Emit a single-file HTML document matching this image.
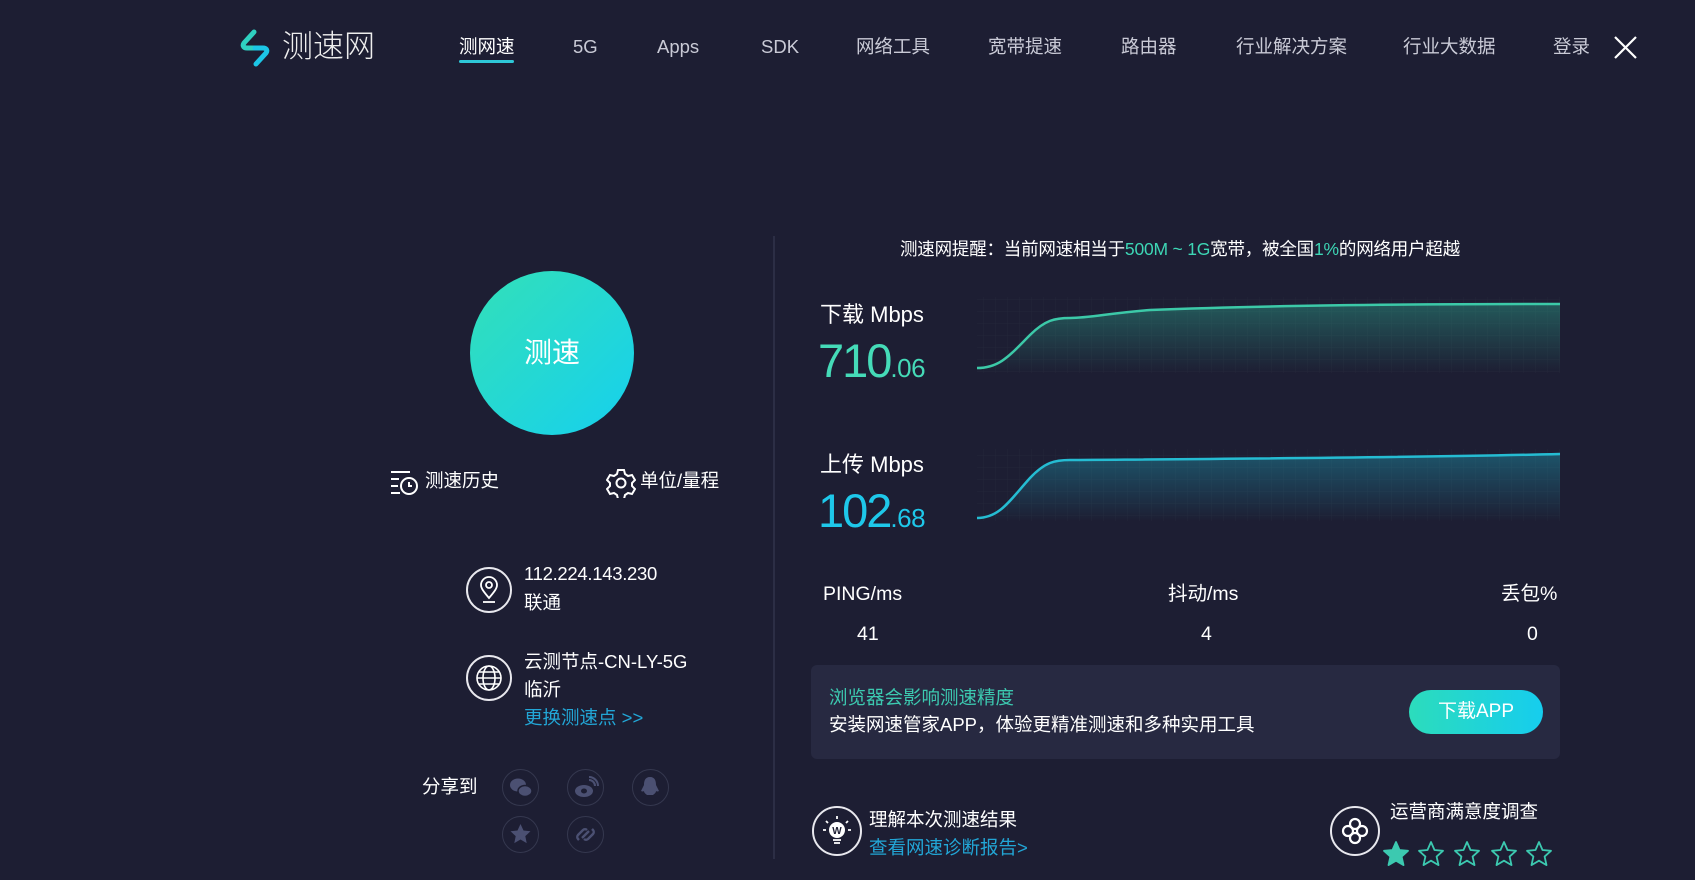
<!DOCTYPE html>
<html><head><meta charset="utf-8"><style>
*{margin:0;padding:0;box-sizing:border-box}
body{width:1695px;height:880px;background:#1d1e33;font-family:"Liberation Sans","Noto Sans CJK SC",sans-serif;color:#fff;position:relative;overflow:hidden}
.a{position:absolute;white-space:nowrap;line-height:1.2}
.nav{font-size:18.5px;color:#c9cad6;top:36px}
.t{font-size:18.5px;color:#fff}
.cir{position:absolute;border:2px solid #e8e8ee;border-radius:50%}
.sh{position:absolute;width:37px;height:37px;border:1.5px solid #35384f;border-radius:50%}
</style></head><body>
<svg class="a" style="left:237px;top:29px" width="36" height="38" viewBox="0 0 36 38">
<path d="M17 3 L7 14 C5 17 7 19 10 19 L18 19" stroke="#2fd0c0" stroke-width="5" fill="none" stroke-linecap="round"/>
<path d="M19 35 L29 24 C31 21 29 19 26 19 L18 19" stroke="#1cc6e6" stroke-width="5" fill="none" stroke-linecap="round"/>
</svg>
<div class="a" style="left:282px;top:28px;font-size:31px;color:#eee;font-weight:300">测速网</div>
<div class="a nav" style="left:459px;color:#fff">测网速</div>
<div class="a" style="left:459px;top:60px;width:55px;height:3px;background:#2ec8d8;border-radius:2px"></div>
<div class="a nav" style="left:573px">5G</div>
<div class="a nav" style="left:657px">Apps</div>
<div class="a nav" style="left:761px">SDK</div>
<div class="a nav" style="left:856px">网络工具</div>
<div class="a nav" style="left:988px">宽带提速</div>
<div class="a nav" style="left:1121px">路由器</div>
<div class="a nav" style="left:1236px">行业解决方案</div>
<div class="a nav" style="left:1403px">行业大数据</div>
<div class="a nav" style="left:1553px">登录</div>
<svg class="a" style="left:1614px;top:36px" width="23" height="23"><path d="M1 1L22 22M22 1L1 22" stroke="#fff" stroke-width="2.2"/></svg>

<div class="a" style="left:470px;top:271px;width:164px;height:164px;border-radius:50%;background:linear-gradient(135deg,#33e0b8,#16d0ee)"></div>
<div class="a" style="left:470px;top:336px;width:164px;text-align:center;font-size:28px">测速</div>

<svg class="a" style="left:390px;top:470px" width="30" height="26" viewBox="0 0 30 26" fill="none" stroke="#fff" stroke-width="2"><path d="M1 2H20M1 9H9M1 16H8M1 23H10"/><circle cx="19" cy="16" r="8"/><path d="M19 12V16H22"/></svg>
<div class="a t" style="left:425px;top:470px">测速历史</div>
<svg class="a" style="left:606px;top:468px" width="30" height="30" viewBox="0 0 30 30" fill="none" stroke="#fff" stroke-width="2"><path d="M12 2h6l1 4 3 2 4-1 3 5-3 3v3l3 3-3 5-4-1-3 2-1 4h-6l-1-4-3-2-4 1-3-5 3-3v-3l-3-3 3-5 4 1 3-2z"/><circle cx="15" cy="15" r="4.5"/></svg>
<div class="a t" style="left:640px;top:470px">单位/量程</div>

<div class="cir" style="left:466px;top:567px;width:46px;height:46px"></div>
<svg class="a" style="left:477px;top:576px" width="24" height="28" viewBox="0 0 24 28" fill="none" stroke="#fff" stroke-width="1.8"><path d="M12 22C6 15 4 12 4 9a8 8 0 0116 0c0 3-2 6-8 13z"/><circle cx="12" cy="9" r="3"/><path d="M6 26H18"/></svg>
<div class="a t" style="left:524px;top:563px;letter-spacing:-0.3px">112.224.143.230</div>
<div class="a t" style="left:524px;top:592px">联通</div>
<div class="cir" style="left:466px;top:655px;width:46px;height:46px"></div>
<svg class="a" style="left:475px;top:664px" width="28" height="28" viewBox="0 0 28 28" fill="none" stroke="#fff" stroke-width="1.6"><circle cx="14" cy="14" r="12"/><ellipse cx="14" cy="14" rx="6" ry="12"/><path d="M2 14H26M4 8H24M4 20H24"/></svg>
<div class="a t" style="left:524px;top:651px">云测节点-CN-LY-5G</div>
<div class="a t" style="left:524px;top:679px">临沂</div>
<div class="a" style="left:524px;top:707px;font-size:18.5px;color:#22a6d6">更换测速点 &gt;&gt;</div>

<div class="a t" style="left:422px;top:776px">分享到</div>
<div class="sh" style="left:502px;top:769px"></div>
<div class="sh" style="left:567px;top:769px"></div>
<div class="sh" style="left:632px;top:769px"></div>
<div class="sh" style="left:502px;top:816px"></div>
<div class="sh" style="left:567px;top:816px"></div>
<svg class="a" style="left:502px;top:769px" width="37" height="37"><ellipse cx="16" cy="16" rx="8" ry="6.5" fill="#4b5072"/><ellipse cx="23" cy="22" rx="7" ry="5.5" fill="#4b5072" stroke="#1d1e33" stroke-width="1.5"/></svg>
<svg class="a" style="left:567px;top:769px" width="37" height="37"><ellipse cx="17" cy="22" rx="9" ry="6" fill="#4b5072"/><ellipse cx="17" cy="22" rx="3" ry="2.5" fill="#1d1e33"/><path d="M22 11a6 6 0 016 6M22 8a9 9 0 019 9" stroke="#4b5072" stroke-width="2" fill="none"/></svg>
<svg class="a" style="left:632px;top:769px" width="37" height="37"><path d="M18 8c-5 0-6 4-6 8l-3 6c2 1 3 0 3 0 0 2 2 3 3 4h6c1-1 3-2 3-4 0 0 1 1 3 0l-3-6c0-4-1-8-6-8z" fill="#4b5072"/></svg>
<svg class="a" style="left:502px;top:816px" width="37" height="37"><path d="M18.5 8l3 6.5 7 .8-5.2 4.8 1.4 7-6.2-3.6-6.2 3.6 1.4-7-5.2-4.8 7-.8z" fill="#4b5072"/></svg>
<svg class="a" style="left:567px;top:816px" width="37" height="37"><path d="M12 24l-1-1a3 3 0 010-4l5-5a3 3 0 014 0M25 13l1 1a3 3 0 010 4l-5 5a3 3 0 01-4 0M15 22l7-7" stroke="#4b5072" stroke-width="2.4" fill="none"/></svg>

<div class="a" style="left:773px;top:236px;width:1.5px;height:623px;background:#2c2e45"></div>

<div class="a" style="left:900px;top:239px;font-size:17.5px;color:#fff;letter-spacing:-0.2px">测速网提醒：当前网速相当于<span style="color:#3dd6b5">500M ~ 1G</span>宽带，被全国<span style="color:#3dd6b5">1%</span>的网络用户超越</div>

<svg class="a" style="left:0;top:0" width="1695" height="880">
<defs>
<linearGradient id="g1" x1="0" y1="0" x2="0" y2="1"><stop offset="0" stop-color="#2fc7a4" stop-opacity=".35"/><stop offset="1" stop-color="#2fc7a4" stop-opacity="0"/></linearGradient>
<linearGradient id="g2" x1="0" y1="0" x2="0" y2="1"><stop offset="0" stop-color="#1eb8d0" stop-opacity=".35"/><stop offset="1" stop-color="#1eb8d0" stop-opacity="0"/></linearGradient>
<pattern id="gr" width="12" height="12" patternUnits="userSpaceOnUse"><path d="M12 0V12M0 12H12" stroke="#242639" stroke-width="1" fill="none"/></pattern>
</defs>
<rect x="977" y="297" width="583" height="76" fill="url(#gr)"/>
<rect x="977" y="449" width="583" height="72" fill="url(#gr)"/>
<path d="M977,368 C1000,368 1010,355 1030,335 C1045,320 1055,318 1070,318 C1090,318 1110,313 1150,310 C1250,306 1400,304 1560,304 L1560,373 L977,373Z" fill="url(#g1)"/>
<path d="M977,368 C1000,368 1010,355 1030,335 C1045,320 1055,318 1070,318 C1090,318 1110,313 1150,310 C1250,306 1400,304 1560,304" stroke="#3cc9a8" stroke-width="2.5" fill="none"/>
<path d="M977,518 C1000,518 1010,500 1030,478 C1045,462 1055,460 1070,460 C1200,459 1400,458 1560,454 L1560,521 L977,521Z" fill="url(#g2)"/>
<path d="M977,518 C1000,518 1010,500 1030,478 C1045,462 1055,460 1070,460 C1200,459 1400,458 1560,454" stroke="#25bcd2" stroke-width="2.5" fill="none"/>
</svg>

<div class="a" style="left:820px;top:302px;font-size:22px">下载 Mbps</div>
<div class="a" style="left:818px;top:333px;font-size:47px;color:#45dbb8;letter-spacing:-2px">710<span style="font-size:26px;letter-spacing:-0.5px">.06</span></div>
<div class="a" style="left:820px;top:452px;font-size:22px">上传 Mbps</div>
<div class="a" style="left:818px;top:483px;font-size:47px;color:#1ec8ea;letter-spacing:-2px">102<span style="font-size:26px;letter-spacing:-0.5px">.68</span></div>

<div class="a" style="left:823px;top:582px;font-size:19.5px;line-height:24px">PING/ms</div>
<div class="a" style="left:1168px;top:582px;font-size:19.5px;line-height:24px">抖动/ms</div>
<div class="a" style="left:1501px;top:582px;font-size:19.5px;line-height:24px">丢包%</div>
<div class="a" style="left:857px;top:623px;font-size:19.5px">41</div>
<div class="a" style="left:1201px;top:623px;font-size:19.5px">4</div>
<div class="a" style="left:1527px;top:623px;font-size:19.5px">0</div>

<div class="a" style="left:811px;top:665px;width:749px;height:94px;background:#272941;border-radius:6px"></div>
<div class="a" style="left:829px;top:687px;font-size:18.5px;color:#3cc9b0">浏览器会影响测速精度</div>
<div class="a" style="left:829px;top:714px;font-size:18.5px">安装网速管家APP，体验更精准测速和多种实用工具</div>
<div class="a" style="left:1409px;top:690px;width:134px;height:44px;border-radius:22px;background:linear-gradient(90deg,#2cdcbc,#16cdee);text-align:center;line-height:44px;font-size:19px">下载APP</div>

<div class="cir" style="left:812px;top:806px;width:50px;height:50px"></div>
<svg class="a" style="left:812px;top:806px" width="50" height="50"><circle cx="25" cy="24" r="8" fill="#fff"/><text x="25" y="28" font-size="10" text-anchor="middle" fill="#1d1e33" font-family="Liberation Sans" font-weight="bold">W</text><path d="M21 34H29M22 37H28M25 10V13M14 15l2 2M36 15l-2 2M11 24H14M36 24H39" stroke="#fff" stroke-width="1.8"/></svg>
<div class="a t" style="left:869px;top:809px">理解本次测速结果</div>
<div class="a" style="left:869px;top:837px;font-size:18.5px;color:#22a6d6">查看网速诊断报告&gt;</div>

<div class="cir" style="left:1330px;top:806px;width:50px;height:50px"></div>
<svg class="a" style="left:1330px;top:806px" width="50" height="50" fill="none" stroke="#fff" stroke-width="2.2"><circle cx="25" cy="18" r="5"/><circle cx="25" cy="32" r="5"/><circle cx="18" cy="25" r="5"/><circle cx="32" cy="25" r="5"/></svg>
<div class="a t" style="left:1390px;top:801px">运营商满意度调查</div>
<svg class="a" style="left:1382px;top:840px" width="180" height="30" viewBox="0 0 180 30">
<g stroke="#3cc9b0" stroke-width="1.8" stroke-linejoin="round">
<path d="M14 2l3.5 8 8.5.8-6.4 5.8 1.9 8.5L14 20.7 6.5 25.1l1.9-8.5L2 10.8l8.5-.8z" fill="#3cc9b0"/>
<path transform="translate(35,0)" d="M14 2l3.5 8 8.5.8-6.4 5.8 1.9 8.5L14 20.7 6.5 25.1l1.9-8.5L2 10.8l8.5-.8z" fill="none"/>
<path transform="translate(71,0)" d="M14 2l3.5 8 8.5.8-6.4 5.8 1.9 8.5L14 20.7 6.5 25.1l1.9-8.5L2 10.8l8.5-.8z" fill="none"/>
<path transform="translate(108,0)" d="M14 2l3.5 8 8.5.8-6.4 5.8 1.9 8.5L14 20.7 6.5 25.1l1.9-8.5L2 10.8l8.5-.8z" fill="none"/>
<path transform="translate(143,0)" d="M14 2l3.5 8 8.5.8-6.4 5.8 1.9 8.5L14 20.7 6.5 25.1l1.9-8.5L2 10.8l8.5-.8z" fill="none"/>
</g></svg>
</body></html>
